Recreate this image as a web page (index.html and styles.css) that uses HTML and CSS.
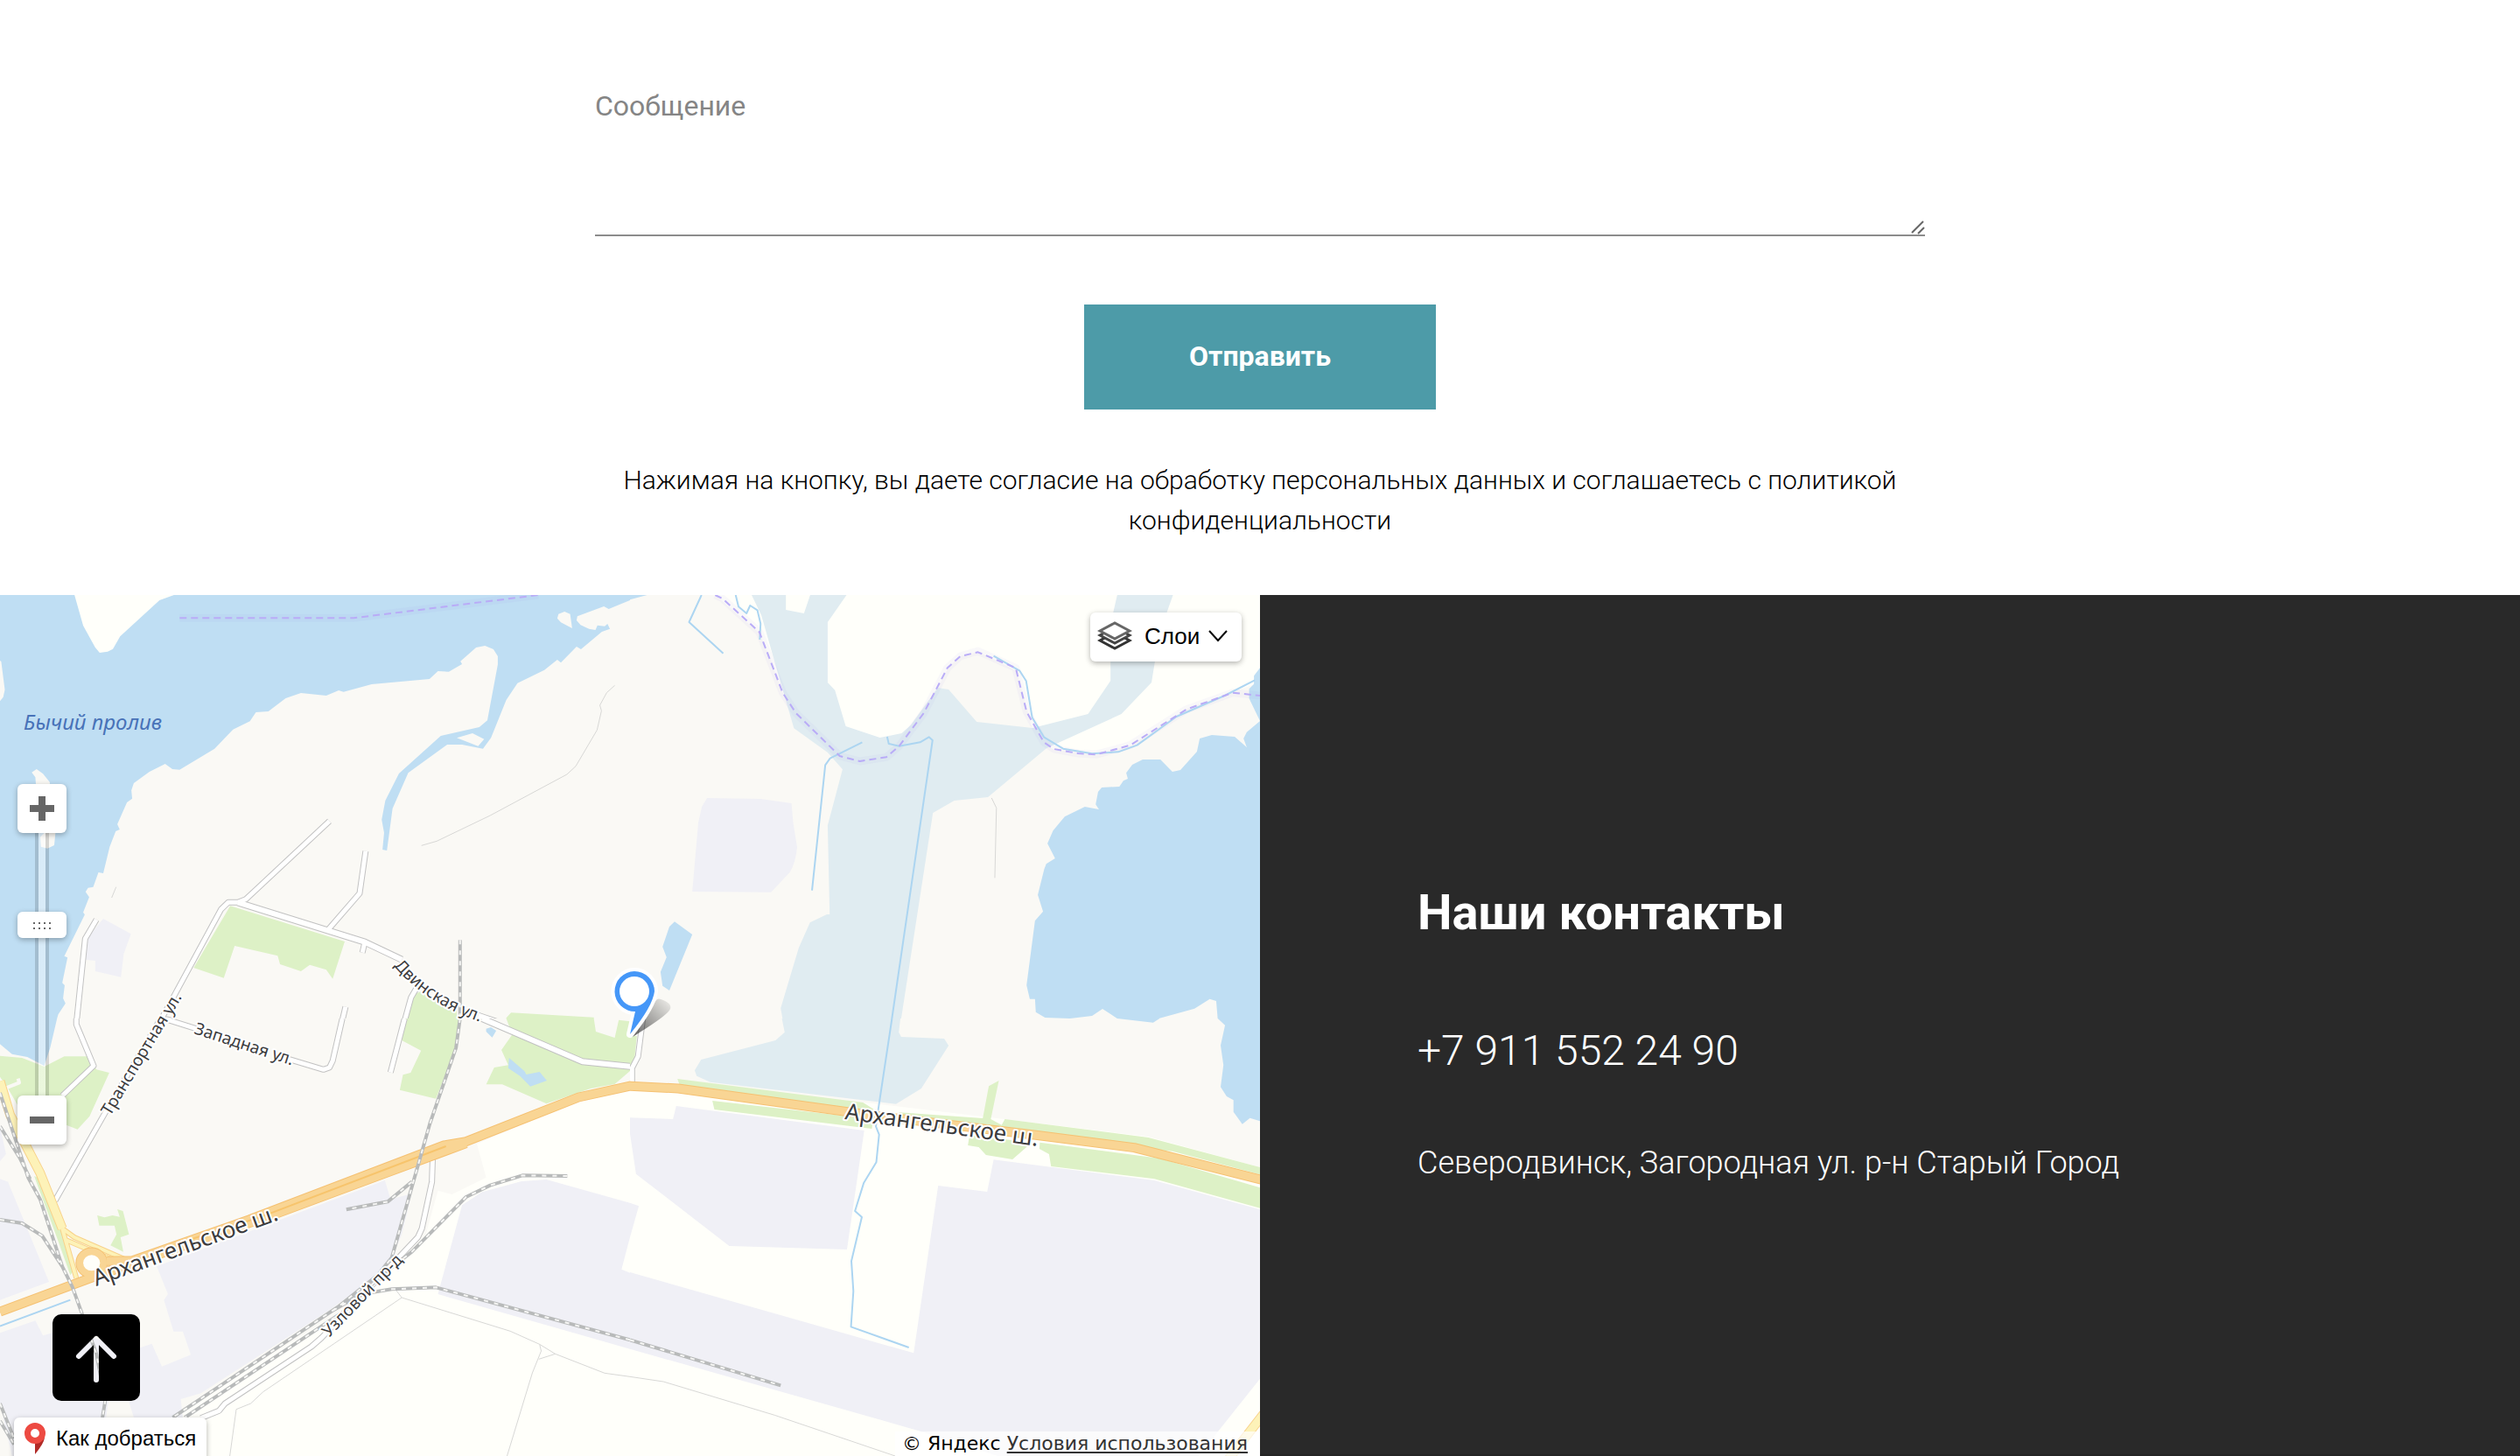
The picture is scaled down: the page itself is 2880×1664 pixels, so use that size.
FILE: index.html
```html
<!DOCTYPE html>
<html lang="ru">
<head>
<meta charset="utf-8">
<title>Наши контакты</title>
<meta name="viewport" content="width=device-width, initial-scale=1">
<link rel="stylesheet" href="styles.css">
</head>
<body>
<form class="feedback">
  <div class="feedback-field">
    <textarea class="feedback-message" aria-label="Сообщение" placeholder="Сообщение"></textarea>
    <svg class="feedback-grip" width="18" height="18" viewBox="0 0 18 18" fill="none" stroke="#666" stroke-width="2"><path d="M3 16 16 3M10 17 17 10"/></svg>
  </div>
  <button class="feedback-submit" type="button">Отправить</button>
  <p class="feedback-note">Нажимая на кнопку, вы даете согласие на обработку персональных данных и соглашаетесь с политикой конфиденциальности</p>
</form>

<section class="location">
  <div class="map">
    <svg class="map-canvas" viewBox="0 0 1440 984" preserveAspectRatio="xMidYMid slice" role="img" aria-label="Карта">
      <defs>
        <linearGradient id="pin-shadow" x1="0" y1="1" x2="1" y2="0">
          <stop offset="0" stop-color="#000" stop-opacity=".6"/>
          <stop offset="1" stop-color="#000" stop-opacity=".04"/>
        </linearGradient>
      </defs>

      <!-- north-west tile -->
      <svg class="tile" x="0" y="-10" width="720" height="500" viewBox="0 0 1568 1500" preserveAspectRatio="none">
        <rect class="land" width="1568" height="1500"/>
        <path class="water" d="M0 20H1568V48L1515 78 1503 69 1437 103 1435 117 1445 133 1466 146 1482 150 1487 134 1505 137 1512 129 1518 146 1498 156 1446 216 1435 207 1396 262 1387 252 1355 287 1288 332 1260 390 1222 520 1202 557 1150 543 1113 543 1016 640 977 762 963 906 952 903 956 845 950 800 959 735 993 642 1097 513 1193 483 1213 460 1239 268 1239 240 1228 216 1207 204 1185 210 1146 257 1150 267 1117 293 1090 291 1069 318 925 336 855 362 843 357 812 375 749 366 711 384 668 429 637 432 622 463 580 491 534 557 447 629 429 627 411 609 372 636 333 675 327 700 329 728 316 741 292 816 298 834 288 840 273 893 257 984 245 981 232 1031 219 1034 213 1048 222 1066 207 1118 211 1126 160 1268 168 1273 155 1360 161 1368 157 1413 163 1430 145 1468 138 1500 0 1500Z"/>
        <path class="pale" d="M185 28 207 135 237 210 248 228 268 224 281 215 299 172 397 48 437 28Z"/>
        <path class="land" d="M0 255 3 258 12 355 8 380 0 394ZM1390 95 1405 87 1419 95 1424 144 1396 124 1387 110ZM1137 520 1176 504 1205 524 1190 548ZM79 638 91 627 107 643 124 672V690H90L88 655ZM100 860 110 846H138L135 888 118 899 102 893Z"/>
        <path class="plot" d="M257 1140 326 1192 308 1260 301 1340 237 1320V1284L211 1280 215 1210Z"/>
        <path class="green" d="M573 1096 858 1218 828 1346 812 1315 771 1298 749 1320 697 1296 691 1267 584 1233 557 1343 482 1308ZM1046 1390 1137 1450V1500H1010L1030 1400ZM1272 1462 1478 1478 1480 1500H1262L1260 1480ZM1542 1488 1568 1490V1500H1540Z"/>
        <path class="trail" d="M1530 340 1510 365 1493 408 1497 427 1486 493 1433 617 1411 645 1220 786 1087 874 1049 889M289 1031 278 1068"/>
        <path class="road-edge" d="M820 805 612 1073 592 1084M910 908 895 1053 815 1180M908 1220 902 1256M240 1143 212 1208 190 1500M860 1442 850 1500M1038 1375 1023 1410 1005 1500M412 1484 500 1510M592 1084H568L550 1108 433 1405 395 1500"/>
        <path class="road-edge wide" d="M592 1084 908 1220 1000 1280M1190 1472 1250 1500"/>
        <path class="road" d="M820 805 612 1073 592 1084M910 908 895 1053 815 1180M908 1220 902 1256M240 1143 212 1208 190 1500M860 1442 850 1500M1038 1375 1023 1410 1005 1500M412 1484 500 1510M592 1084H568L550 1108 433 1405 395 1500"/>
        <path class="road wide" d="M592 1084 908 1220 1000 1280M1190 1472 1250 1500"/>
        <path class="rail-base" d="M1145 1213V1500"/><path class="rail" d="M1145 1213V1500"/>
        <path class="border-halo" d="M447 109H880L1340 30"/><path class="border" d="M447 109H880L1340 30"/>
      </svg>

      <!-- north-east tile -->
      <svg class="tile" x="720" y="-10" width="720" height="500" viewBox="0 0 1568 1500" preserveAspectRatio="none">
        <rect class="land" width="1568" height="1500"/>
        <path class="water" d="M0 28H48L0 46Z"/>
        <path class="pale" d="M210 28H1568V330L1500 362 1382 422 1248 545 1150 577 1050 557 1000 486 990 430 962 290 868 225 820 240 792 280 766 348 640 585 572 600 520 580 410 435 378 360 350 250 322 160Z"/>
        <path class="marsh" d="M302 28H388V81L433 93 449 28H540L492 123V330L510 356 537 480 622 519 676 504 700 475 766 348 793 354 863 465 1002 486 1140 438 1196 324V130L1213 28H1352L1318 160 1298 330 1223 438 1037 555 891 723 807 735 754 777 673 1500H382L375 1447 420 1240 448 1153 490 1125H497L492 820 529 628 492 570 408 487 378 345 327 100Z"/>
        <path class="plot" d="M192 726 325 729 402 744 406 810 416 895Q412 950 398 980L351 1049 155 1047 170 810 179 755Z"/>
        <path class="water" d="M1568 280 1553 307V335L1541 352V385L1568 462 1535 500 1527 522 1535 552 1505 516 1448 510 1418 522 1411 567 1370 630 1350 636 1320 594H1276L1250 612 1235 640 1239 660 1228 667 1218 687 1174 690 1165 705 1159 748 1167 765 1132 756 1082 790 1053 838 1039 882 1058 933 1036 952 1031 970 1015 1058 1028 1115 1008 1147 987 1368 995 1415H1008L1010 1460 1033 1479 1095 1482 1150 1473 1176 1449 1215 1484 1302 1496 1318 1481 1405 1448 1443 1415 1459 1422 1463 1487 1475 1500H1568ZM111 1150 155 1194 98 1386 81 1370 76 1322 91 1272 81 1236 98 1167Z"/>
        <path class="trail" d="M900 726 912 760 908 1000"/>
        <path class="border-halo" d="M212 30 230 42 322 157 380 365 413 435 522 582 572 600 638 586 670 548 731 435 790 280 822 240 866 222 960 280 987 430 1030 535 1055 558 1115 573 1160 577 1245 545 1385 422 1500 365 1568 375"/>
        <path class="stream" d="M178 30 147 123 232 230M263 30 270 70 290 93 299 66 317 82 325 128 323 183M578 535 498 590 486 613 453 1043M640 516 644 540 670 548 722 535 744 517 753 528 650 1500M905 239 970 290 986 325 1001 450 1030 517 1078 557 1150 574 1215 568 1262 545 1360 447 1480 375 1555 322"/>
        <path class="border" d="M212 30 230 42 322 157 380 365 413 435 522 582 572 600 638 586 670 548 731 435 790 280 822 240 866 226 960 280 987 430 1030 535 1055 558 1115 573 1160 577 1245 545 1385 422 1500 365 1568 375"/>
      </svg>

      <!-- south-west tile -->
      <svg class="tile" x="0" y="484" width="720" height="500" viewBox="0 0 1568 1500" preserveAspectRatio="none">
        <rect class="land" width="1568" height="1500"/>
        <path class="pale" d="M1568 235 1440 280 1187 430 1210 545 1125 603 1090 590 1060 740 980 830 830 1020 420 1370V1500H1568Z"/>
        <path class="water" d="M0 0H142L125 100 110 162 68 132 30 122 0 88Z"/>
        <path class="green" d="M0 128 55 135 110 165 160 130H218L240 175 272 186 223 335 193 380 165 365V300H45L20 240 0 200ZM1010 0H1145L1135 100 1085 275 995 245 1003 193 1022 186 1048 110 1000 75ZM1260 0H1478L1483 45 1530 66 1540 5 1568 10V180L1530 225 1470 240 1360 292 1250 226H1210L1230 168 1265 160 1248 108 1275 55ZM242 675 260 682 280 675 298 680 292 654 306 660 321 740 300 750 307 800 275 778 290 740 285 710H247ZM85 540 100 550 150 720 185 860 175 880 140 745Z"/>
        <path class="water" d="M1210 35 1222 30 1235 42 1225 65 1210 45ZM1267 135 1305 180 1310 192 1343 183 1361 213 1320 233 1295 198 1265 170Z"/>
        <path class="plot" d="M0 370 15 465 0 490ZM0 550 20 560 122 903 0 965ZM390 850 958 555 972 620 1025 600 1000 740 975 820 940 880 820 1000 500 1285 450 1305 455 1368H333L320 1310H270L250 1500H30L0 1320V1078L88 1036 107 1087 150 1070 345 1130 378 1115 403 1193 475 1153 455 1073H432L408 965 418 945ZM1568 632 1360 552 1298 558 1200 595 1150 640 1090 945 1568 1133Z"/>
        <path class="pale" d="M1568 750 1547 860 1568 872Z"/>
        <path class="trail" d="M985 930 1000 957 1270 1072 1343 1117 1347 1140 1325 1215 1262 1500M1343 1117 1382 1150 1505 1216 1568 1228M1382 1150 1341 1168M1000 957 655 1280 624 1320 588 1340 572 1500"/>
        <path class="stream" d="M175 965 0 1055"/>
        <path class="drive" d="M15 238 48 220 45 206"/>
        <path class="road-edge" d="M190 0V20L233 162 155 265M400 0 265 315 137 625M412 2 500 40M720 140 805 175 820 168 828 145 852 0M1007 0 972 185M1077 475 1075 560 1050 720 1040 750 985 830 800 1095 775 1125 560 1320 545 1345 500 1370"/>
        <path class="road-edge wide" d="M1200 0 1450 148 1575 165"/>
        <path class="road" d="M190 0V20L233 162 155 265M400 0 265 315 137 625M412 2 500 40M720 140 805 175 820 168 828 145 852 0M1007 0 972 185M1077 475 1075 560 1050 720 1040 750 985 830 800 1095 775 1125 560 1320 545 1345 500 1370"/>
        <path class="road wide" d="M1200 0 1450 148 1575 165"/>
        <path class="street-edge" d="M0 215 25 330 100 530 155 720"/>
        <path class="ramp-edge" d="M155 720 190 890M155 720 185 750 310 825M165 760 285 830M190 905 300 840"/>
        <path class="street" d="M0 215 25 330 100 530 155 720"/>
        <path class="ramp" d="M155 720 190 890M155 720 185 750 310 825M165 760 285 830M190 905 300 840"/>
        <ellipse class="highway-edge" cx="228" cy="838" rx="28" ry="37"/>
        <path class="highway-edge" d="M1580 228 1440 270 1160 422 1105 435 620 690 330 830 265 832M1160 428 960 530 690 668 235 885 0 1005"/>
        <ellipse class="highway" cx="228" cy="838" rx="28" ry="37"/>
        <path class="highway" d="M1580 228 1440 270 1160 422 1105 435 620 690 330 830 265 832M1160 428 960 530 690 668 235 885 0 1005"/>
        <path class="divider" d="M1110 438 650 680 480 755"/>
        <ellipse class="pale" cx="228" cy="838" rx="21" ry="27"/>
        <path class="rail-base" d="M1145 0 1135 100 1070 360 975 820 940 880 840 990 430 1368M1025 560 965 628 862 655M1412 540 1300 538 1220 572 1160 612 1025 800 950 880 860 1000 460 1368M1568 1102 1085 922 975 928 900 945 830 1000M0 255 70 545 100 620 155 850 180 920 205 1015 240 1150 262 1310 255 1368M0 370 50 480 75 550M0 690 55 702 105 745 155 850M0 1320 35 1440M0 1380 35 1460"/>
        <path class="rail" d="M1145 0 1135 100 1070 360 975 820 940 880 840 990 430 1368M1025 560 965 628 862 655M1412 540 1300 538 1220 572 1160 612 1025 800 950 880 860 1000 460 1368M1568 1102 1085 922 975 928 900 945 830 1000M0 255 70 545 100 620 155 850 180 920 205 1015 240 1150 262 1310 255 1368M0 370 50 480 75 550M0 690 55 702 105 745 155 850M0 1320 35 1440M0 1380 35 1460"/>
      </svg>

      <!-- south-east tile -->
      <svg class="tile" x="720" y="484" width="720" height="500" viewBox="0 0 1568 1500" preserveAspectRatio="none">
        <rect class="pale" width="1568" height="1500"/>
        <path class="land" d="M0 0H1568V510L1290 405 900 340 600 290 0 220Z"/>
        <path class="marsh" d="M378 0 385 47 362 75 177 141 161 178 166 197 200 218 662 293 725 240 793 93 782 69 675 63 669 47 673 0Z"/>
        <path class="water" d="M1463 0 1481 23 1470 92 1477 160 1470 235 1485 267 1502 280V320L1524 362 1543 341 1568 352V0ZM1213 0 1302 14 1318 0Z"/>
        <path class="green" d="M0 60H17L10 155 0 160ZM118 207 580 288 605 310 620 330 540 315 127 240ZM205 282 605 345 602 378 210 312ZM670 322 878 342 893 232 918 213 898 345 925 365 933 345 1290 408 1568 510V535L1350 455 1010 410 660 345ZM845 400 1000 425 952 483 886 468 868 441 841 435ZM1020 425 1320 480 1568 580V650L1305 550 1048 507 1043 465 1019 447Z"/>
        <path class="plot" d="M115 300 583 384 540 792 247 780 15 533 0 395V340L107 345ZM0 632 22 643 0 750ZM905 484 1305 555 1568 655V1235L1415 1500H915L730 1418 0 1133V870L706 1147 767 573 889 594Z"/>
        <path class="trail" d="M0 1228 83 1245 360 1360 660 1500"/>
        <path class="street-edge" d="M1490 1510 1580 1350"/><path class="street" d="M1490 1510 1580 1350"/>
        <path class="road-edge" d="M32 0 20 130 5 170V222"/><path class="road" d="M32 0 20 130 5 170V222"/>
        <path class="highway-edge" d="M-12 228 0 232 120 240 620 335 1010 400 1255 443 1580 556"/>
        <path class="highway" d="M-12 228 0 232 120 240 620 335 1010 400 1255 443 1580 556"/>
        <path class="stream" d="M652 0 617 320 612 370 620 398 613 493 582 563 560 660 577 681 551 832 556 935 550 1057 694 1128"/>
        <path class="rail-base" d="M0 1102 375 1258"/><path class="rail" d="M0 1102 375 1258"/>
      </svg>

      <!-- labels -->
      <path id="dvinskaya" d="M450 424Q488 468 552 489" fill="none"/>
      <text class="label-water" x="27" y="154">Бычий пролив</text>
      <text class="label-street"><textPath href="#dvinskaya">Двинская ул.</textPath></text>
      <text class="label-street" transform="translate(126 596) rotate(-59)">Транспортная ул.</text>
      <text class="label-street" transform="translate(221 501) rotate(18)">Западная ул.</text>
      <text class="label-street" transform="translate(376 849) rotate(-46)">Узловой пр-д</text>
      <text class="label-highway" transform="translate(110 790) rotate(-20)">Архангельское ш.</text>
      <text class="label-highway" transform="translate(965 599) rotate(8)">Архангельское ш.</text>

      <!-- place marker -->
      <path fill="url(#pin-shadow)" d="M723 505 750 463Q752 460 758 463 768 467 766 473 764 480 723 505Z"/>
      <path class="pin-halo" d="M725 430A23 23 0 1 0 726 476L720 502Q746 470 748 453A23 23 0 0 0 725 430Z"/>
      <path class="pin" d="M725 430A23 23 0 1 0 726 476L720 502Q746 470 748 453A23 23 0 0 0 725 430Z"/>
      <circle cx="725" cy="453" r="17" fill="#fff"/>
    </svg>

    <div class="zoom">
      <button class="map-button zoom-button" type="button" aria-label="Приблизить">
        <svg width="28" height="28" viewBox="0 0 28 28"><path fill="#666" d="M10 0h8v10h10v8H18v10h-8V18H0v-8h10z"/></svg>
      </button>
      <input class="zoom-range" type="range" min="0" max="18" value="12" aria-label="Масштаб">
      <button class="map-button zoom-button" type="button" aria-label="Отдалить">
        <svg width="28" height="28" viewBox="0 0 28 28"><path fill="#666" d="M0 10h28v8H0z"/></svg>
      </button>
    </div>

    <button class="map-button layers" type="button">
      <svg width="40" height="34" viewBox="0 0 40 34" fill="#fff" stroke-width="3">
        <path stroke="#333" d="M3 22 20 13 37 22 20 31Z"/>
        <path stroke="#444" d="M3 16 20 7 37 16 20 25Z"/>
        <path stroke="#666" d="M3 11 20 2 37 11 20 20Z"/>
      </svg>
      <span>Слои</span>
      <svg width="22" height="14" viewBox="0 0 22 14" fill="none" stroke="#000" stroke-width="2"><path d="M1 1 11 12 21 1"/></svg>
    </button>

    <button class="to-top" type="button" aria-label="Наверх">
      <svg width="100" height="100" viewBox="0 0 100 100">
        <mask id="arrow"><rect width="100" height="100" fill="#fff"/><path d="M50 75V28M30 48 50 28 70 48" fill="none" stroke="#000" stroke-width="6" stroke-linecap="round" stroke-linejoin="round"/></mask>
        <rect width="100" height="99" rx="10" mask="url(#arrow)"/>
      </svg>
    </button>

    <button class="map-button route" type="button">
      <svg width="26" height="38" viewBox="0 0 26 38"><path fill="#b12a27" d="M13 37V22L24 18Q23 25 13 37Z"/><path fill="#ed4a42" fill-rule="evenodd" d="M13 1a12 12 0 0 1 0 24a12 12 0 0 1 0-24Zm0 7a5 5 0 0 0 0 10a5 5 0 0 0 0-10Z"/></svg>
      <span>Как добраться</span>
    </button>

    <p class="copyright">© Яндекс <a href="#">Условия использования</a></p>
  </div>

  <div class="contacts">
    <h2 class="contacts-title">Наши контакты</h2>
    <a class="contacts-phone" href="tel:+79115522490">+7 911 552 24 90</a>
    <p class="contacts-address">Северодвинск, Загородная ул. р-н Старый Город</p>
  </div>
</section>
</body>
</html>
```
FILE: styles.css
```css
* {
  box-sizing: border-box;
}

body {
  margin: 0;
  min-height: 100vh;
  display: flex;
  flex-direction: column;
  background: #fff;
  color: #000;
  font-family: Roboto, "Liberation Sans", sans-serif;
}

button {
  border: 0;
  padding: 0;
  font: inherit;
  cursor: pointer;
}

/* feedback form */
.feedback {
  width: 100%;
  max-width: 1520px;
  margin: 0 auto;
  padding: 80px 0 62px;
  display: flex;
  flex-direction: column;
  align-items: center;
}

.feedback-field {
  position: relative;
  width: 100%;
}

.feedback-message {
  display: block;
  width: 100%;
  height: 190px;
  padding: 22px 0 0;
  border: 0;
  border-bottom: 2px solid #8c8c8c;
  background: transparent;
  font: 400 32px/38px Roboto, "Liberation Sans", sans-serif;
  resize: none;
  outline: 0;
}

.feedback-message::placeholder {
  color: #858585;
}

.feedback-grip {
  position: absolute;
  right: 0;
  bottom: 2px;
}

.feedback-submit {
  width: 402px;
  height: 120px;
  margin-top: 78px;
  padding-bottom: 2px;
  background: #4d9ba8;
  color: #fff;
  font-size: 32px;
  font-weight: 700;
}

.feedback-note {
  margin: 58px 0 0;
  font-size: 30px;
  font-weight: 300;
  line-height: 46px;
  text-align: center;
}

/* map and contacts */
.location {
  flex: 1;
  display: grid;
  grid-template-columns: 1fr 1fr;
}

.map {
  position: relative;
  overflow: hidden;
  background: #faf9f5;
  font-family: "Liberation Sans", Arial, sans-serif;
}

.map-canvas {
  position: absolute;
  inset: 0;
  width: 100%;
  height: 100%;
}

.tile {
  overflow: hidden;
}

.tile path,
.tile ellipse {
  vector-effect: non-scaling-stroke;
  stroke-linejoin: round;
}

.land { fill: #faf9f5; }
.pale { fill: #fffffa; }
.water { fill: #bfdef3; }
.marsh { fill: #e0ecf1; }
.green { fill: #ddf1c6; }
.plot { fill: #f0f0f6; }

.trail { fill: none; stroke: #d8d8d6; stroke-width: 1px; }
.stream { fill: none; stroke: #acd5f1; stroke-width: 2px; }
.drive { fill: none; stroke: #faf9f5; stroke-width: 4px; }
.road-edge { fill: none; stroke: #c2c2c2; stroke-width: 7px; }
.road { fill: none; stroke: #fff; stroke-width: 5px; }
.road-edge.wide { stroke-width: 8px; }
.road.wide { stroke-width: 6px; }
.street-edge { fill: none; stroke: #f8d28a; stroke-width: 11px; }
.street { fill: none; stroke: #fdf2b8; stroke-width: 9px; }
.ramp-edge { fill: none; stroke: #f8d28a; stroke-width: 6px; }
.ramp { fill: none; stroke: #fdf2b8; stroke-width: 4px; }
.highway-edge { fill: none; stroke: #f5c172; stroke-width: 11px; }
.highway { fill: none; stroke: #f9d594; stroke-width: 9px; }
.divider { fill: none; stroke: #f7c46c; stroke-width: 2px; }
.rail-base { fill: none; stroke: #b8baba; stroke-width: 4px; }
.rail { fill: none; stroke: #f6f6f4; stroke-width: 2px; stroke-dasharray: 5 7; }
.border-halo { fill: none; stroke: #9c8cf0; stroke-opacity: .06; stroke-width: 9px; }
.border { fill: none; stroke: #b9acf7; stroke-width: 2px; stroke-dasharray: 8 5; }

.label-water,
.label-street,
.label-highway {
  font-family: "Noto Sans", "DejaVu Sans", sans-serif;
}

.label-water {
  fill: #4872b8;
  font-size: 24px;
  font-style: italic;
}

.label-street,
.label-highway {
  fill: #3c3c3e;
  stroke: #fff;
  stroke-width: 4px;
  stroke-linejoin: round;
  paint-order: stroke;
}

.label-street { font-size: 19px; }
.label-highway { font-size: 26px; }

.pin-halo { fill: #fff; stroke: #fff; stroke-width: 8px; stroke-linejoin: round; }
.pin { fill: #4597f8; }

/* controls over the map */
.map-button {
  display: flex;
  align-items: center;
  background: #fff;
  border-radius: 6px;
  box-shadow: 0 2px 6px rgba(0, 0, 0, .3);
  color: #000;
  font-size: 26px;
}

.zoom {
  position: absolute;
  left: 20px;
  top: 216px;
  display: flex;
  flex-direction: column;
}

.zoom-button {
  justify-content: center;
  width: 56px;
  height: 56px;
}

.zoom-range {
  width: 56px;
  height: 300px;
  margin: 0;
  appearance: none;
  writing-mode: vertical-lr;
  direction: rtl;
  background: linear-gradient(90deg, rgba(0, 0, 0, .15) 4px, rgba(255, 255, 255, .4) 4px, rgba(255, 255, 255, .4) 12px, rgba(0, 0, 0, .15) 12px) center / 16px 100% no-repeat;
}

.zoom-range::-webkit-slider-thumb {
  appearance: none;
  width: 56px;
  height: 30px;
  border-radius: 6px;
  background:
    linear-gradient(#fff, #fff) left / 17px 100% no-repeat,
    linear-gradient(#fff, #fff) right / 17px 100% no-repeat,
    linear-gradient(#fff, #fff) top / 100% 11px no-repeat,
    linear-gradient(#fff, #fff) bottom / 100% 9px no-repeat,
    conic-gradient(from 270deg at 2px 2px, #666 90deg, #fff 0) 18px 12px / 6px 6px;
  box-shadow: 0 2px 6px rgba(0, 0, 0, .3);
}

.layers {
  position: absolute;
  top: 20px;
  right: 21px;
  width: 173px;
  height: 56px;
  padding: 0 0 2px 8px;
}

.layers span {
  margin: 0 10px 0 14px;
}

.to-top {
  position: absolute;
  left: 60px;
  bottom: 62px;
  width: 100px;
  height: 100px;
  background: none;
}

.to-top svg {
  display: block;
}

.route {
  position: absolute;
  left: 16px;
  bottom: -8px;
  width: 220px;
  height: 52px;
  padding: 0 0 4px 11px;
  gap: 11px;
  font-size: 24px;
}

.copyright {
  position: absolute;
  right: 0;
  bottom: 0;
  margin: 0;
  padding: 0 14px 0 8px;
  background: rgba(255, 255, 255, .7);
  font-family: "DejaVu Sans", sans-serif;
  font-size: 22px;
  line-height: 28px;
}

.copyright a {
  color: #333;
}

.contacts {
  display: flex;
  flex-direction: column;
  justify-content: center;
  align-items: flex-start;
  padding: 24px 12.5% 0;
  border-bottom: 2px solid #242424;
  background: #292929;
  color: #fff;
}

.contacts-title {
  margin: 0;
  font-size: 56px;
  font-weight: 700;
  line-height: 68px;
}

.contacts-phone {
  margin-top: 88px;
  color: inherit;
  font-size: 48px;
  font-weight: 300;
  line-height: 72px;
  text-decoration: none;
}

.contacts-address {
  margin: 64px 0 0;
  font-size: 36px;
  font-weight: 300;
  line-height: 56px;
}
```
